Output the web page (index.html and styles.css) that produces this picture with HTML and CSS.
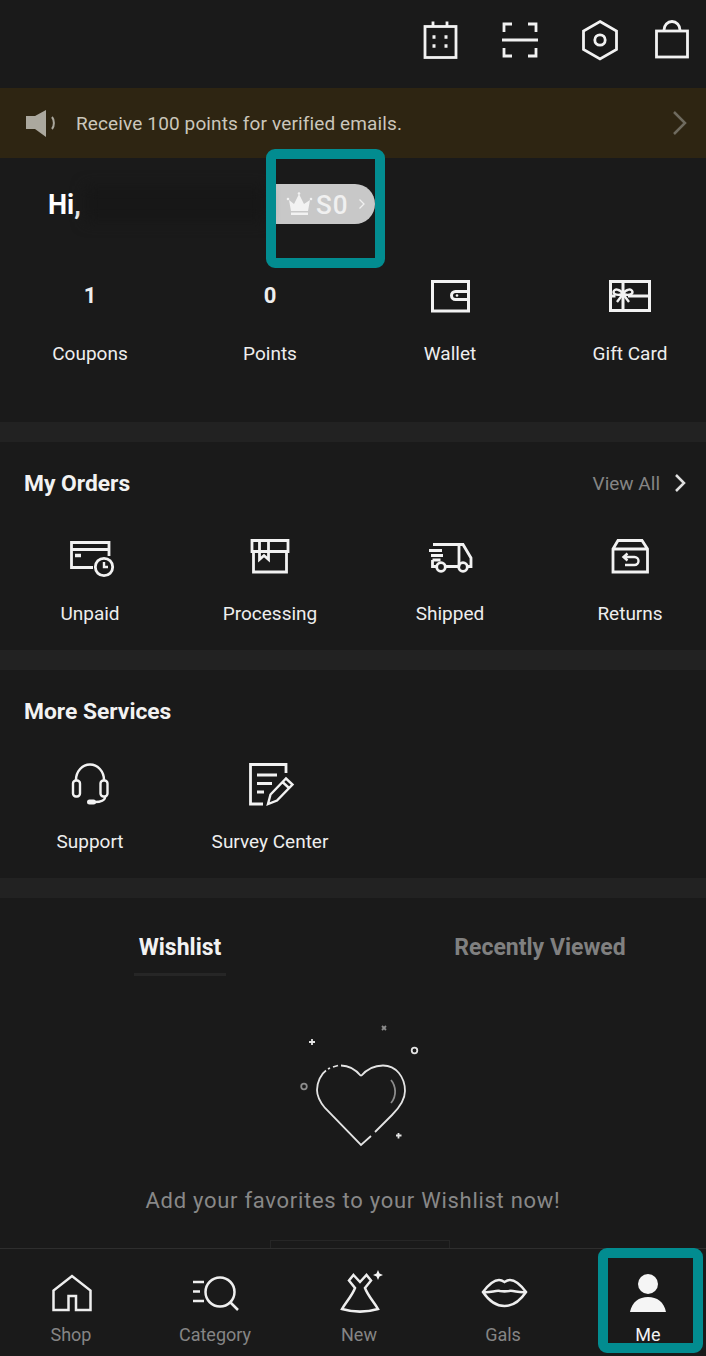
FILE: index.html
```html
<!DOCTYPE html>
<html lang="en">
<head>
  <meta charset="UTF-8">
  <meta name="viewport" content="width=device-width, initial-scale=1.0">
  <title>Me</title>
  <link rel="stylesheet" href="styles.css">
</head>
<body>

<div class="top-bar">
  <svg class="ico" viewBox="0 0 44 44"><rect x="7" y="8.500" width="31" height="31"/><path d="M15 3.500v5M29 3.500v5"/><path class="dots" d="M14.500 19h3M26.500 19h3M14.500 28h3M26.500 28h3"/></svg>
  <svg class="ico" viewBox="0 0 44 44"><path d="M14 6H6v8M30 6h8v8M14 38H6v-8M30 38h8v-8M4 22h36"/></svg>
  <svg class="ico" viewBox="0 0 44 44"><path d="M22 3.500l16.500 9.500v18.500L22 41 5.500 31.500V13z"/><circle cx="22" cy="22" r="5.200"/></svg>
  <svg class="ico bag" viewBox="0 0 44 44"><rect x="6.500" y="13" width="31" height="26"/><path d="M14 13v-1a8 8.500 0 0 1 16 0v1"/></svg>
</div>

<div class="notice">
  <svg class="speaker" viewBox="0 0 30 28"><path d="M0 7h9l11-6v27L9 20H0z"/><path class="paren" d="M26 8c2.500 3 2.500 9 0 12"/></svg>
  <span class="notice-text">Receive 100 points for verified emails.</span>
  <svg class="notice-arrow" viewBox="0 0 16 26"><path d="M2 2l11 11L2 24"/></svg>
</div>

<div class="section profile">
  <div class="greeting">
    <span class="hi">Hi,</span>
    <span class="name"></span>
    <a class="level">
      <svg class="crown" viewBox="0 0 28 26"><path d="M4 9l5 4 5-10 5 10 6-4-2 11H6z"/><rect x="6" y="21.500" width="17" height="2.500"/><circle cx="3" cy="8" r="1.300"/><circle cx="14" cy="2.500" r="1.300"/><circle cx="26" cy="8" r="1.300"/></svg>
      <span class="level-name">S0</span>
      <svg class="level-arrow" viewBox="0 0 8 12"><path d="M1.500 1.500l4.500 4.500-4.500 4.500"/></svg>
    </a>
  </div>
  <div class="grid">
    <div class="item"><div class="count">1</div><span>Coupons</span></div>
    <div class="item"><div class="count">0</div><span>Points</span></div>
    <div class="item">
      <svg class="ico" viewBox="0 0 44 44"><path class="thick" d="M4.500 7.500H40.500V37H4.500z"/><path class="thick" d="M40.500 17.500H27.500a4 4 0 0 0 0 8H40.500"/><circle class="solid" cx="29" cy="21.500" r="1.300"/></svg>
      <span>Wallet</span>
    </div>
    <div class="item">
      <svg class="ico" viewBox="0 0 44 44"><path class="thick" d="M2.500 7.500h39v29h-39zM15 7.500v29M20 22h21.500M2.500 22h5"/><path class="mid" d="M15 20c-3-5-9-6-9.500-2 0 3 5 3.500 9.500 2zM15 20c3-5 9-6 9.500-2 0 3-5 3.500-9.500 2zM15 20l-6 8M15 20l6 8"/></svg>
      <span>Gift Card</span>
    </div>
  </div>
</div>

<div class="section orders">
  <div class="section-head">
    <h2>My Orders</h2>
    <a class="view-all">View All <svg class="view-arrow" viewBox="0 0 12 20"><path d="M2 2l8 8-8 8"/></svg></a>
  </div>
  <div class="grid">
    <div class="item">
      <svg class="ico" viewBox="0 0 44 44"><path d="M41 22V8.500H3.500V33.500H25M3.500 15.500H41"/><path class="dots" d="M7 21.500h6"/><circle cx="36" cy="33" r="8.700"/><path class="mid" d="M36 28v5h4"/></svg>
      <span>Unpaid</span>
    </div>
    <div class="item">
      <svg class="ico" viewBox="0 0 44 44"><path d="M4 6.500h36v11H4zM5.500 17.500V38h33V17.500M11.500 6.500V25.500l4.500-4 4.500 4V6.500"/></svg>
      <span>Processing</span>
    </div>
    <div class="item">
      <svg class="ico" viewBox="0 0 44 44"><path d="M5 10.500H35L43 24v8.500h-4M31 10.500V32.500M18 32.500h12.500M4.500 26v6.500H8"/><path d="M1 16.500h13M3 21.500h12M4.500 26h8"/><circle cx="13" cy="33" r="4.300"/><circle cx="35" cy="33" r="4.300"/></svg>
      <span>Shipped</span>
    </div>
    <div class="item">
      <svg class="ico" viewBox="0 0 44 44"><path d="M10 6.500H34L39.500 15V38H5V15zM5 15H39.500"/><path class="mid" d="M19.500 19.500l-4 3.500 4 3.500M15.500 23H26.500a4 4 0 0 1 0 8H17"/></svg>
      <span>Returns</span>
    </div>
  </div>
</div>

<div class="section services">
  <div class="section-head">
    <h2>More Services</h2>
  </div>
  <div class="grid">
    <div class="item">
      <svg class="ico" viewBox="0 0 44 44"><path class="mid" d="M8 18a14 15.500 0 0 1 28 0"/><rect class="mid" x="5" y="18.500" width="7" height="16" rx="3"/><rect class="mid" x="32.500" y="18.500" width="7" height="16" rx="3"/><path class="mid" d="M37 35c0 3-4 5-10 5"/><rect class="solid" x="19" y="37.500" width="9" height="5" rx="2.500"/></svg>
      <span>Support</span>
    </div>
    <div class="item">
      <svg class="ico" viewBox="0 0 44 44"><path d="M38 11V2.500H2.500V42H15M9 13h20M9 21.500h15M9 30h7"/><path class="mid" d="M20 42l2.500-9.500L38 16.500l6.500 6L29 38.500zM34.500 20l6.500 6"/></svg>
      <span>Survey Center</span>
    </div>
  </div>
</div>

<div class="wishlist">
  <div class="tabs">
    <div class="tab active">Wishlist</div>
    <div class="tab">Recently Viewed</div>
  </div>
  <svg class="heart" viewBox="0 0 160 150">
    <path d="M81 66C87 59 95 55.500 103 55.500 116 55.500 125 67 125 81 125 90 119 98 112 105L95 122M91 126L81 135 45 98C40 92 37 87 37 80 37 72 41 64 46 60.500M48 59L50 58M53 57L58 55.500M61 55.500C70 55.500 76 60 81 66"/>
    <path class="shine" d="M111 70C116 76 117 86 111 93"/>
    <path class="spark" d="M29 32h6M32 29v6M116 125.500h5.500M118.500 123v5.500"/>
    <path class="shine" d="M102 16l4 4M106 16l-4 4"/>
    <circle class="spark" cx="134.500" cy="40.500" r="2.800"/>
    <circle class="shine" cx="24" cy="76.500" r="2.800"/>
  </svg>
  <p class="empty">Add your favorites to your Wishlist now!</p>
  <div class="go-shop"></div>
</div>

<div class="nav">
  <a class="nav-item">
    <svg class="nav-ico" viewBox="0 0 48 48"><path d="M5.500 40V20.500L24 6l18.500 14.500V40H28V26h-7.500v14z"/></svg>
    <span>Shop</span>
  </a>
  <a class="nav-item">
    <svg class="nav-ico" viewBox="0 0 48 48"><circle cx="28" cy="22" r="14.500"/><path d="M38 32l8 8M1 12h11M1 21.500h7M1 31h11"/></svg>
    <span>Category</span>
  </a>
  <a class="nav-item">
    <svg class="nav-ico" viewBox="0 0 48 48"><path d="M17.500 5L24 12l6.500-7 4.500 5.500-6 7.500c3 8 9 14 13 21-12 3.500-24 3.500-36 0 4-7 10-13 13-21l-6-7.500z"/><path class="solid" d="M42 0l1.500 3.500L47 5l-3.500 1.500L42 10l-1.500-3.500L37 5l3.500-1.500z"/></svg>
    <span>New</span>
  </a>
  <a class="nav-item">
    <svg class="nav-ico" viewBox="0 0 48 48"><path d="M3 22C9 14 15 10 19 10c2 0 4 1 5.500 2 1.500-1 3.500-2 5.500-2 4 0 10 4 16 12-6 9-14 14-21.500 14S9 31 3 22z"/><path d="M3 22c7 1 13-2 17-1 3 .5 6 .5 9 0 4-1 10 2 17 1"/></svg>
    <span>Gals</span>
  </a>
  <a class="nav-item current">
    <svg class="nav-ico" viewBox="0 0 48 48"><circle class="solid" cx="24" cy="14" r="10"/><path class="solid" d="M6 42C8 32 15 27 24 27s16 5 18 15z"/></svg>
    <span>Me</span>
  </a>
</div>

<!-- highlight boxes over the page -->
<div class="mark mark-level"></div>
<div class="mark mark-me"></div>

</body>
</html>
```

FILE: styles.css
```css
* {
  box-sizing: border-box;
}

body {
  font-family: Roboto, "Noto Sans", sans-serif;
  background: #1a1a1a;
  color: #eeeeee;
  margin: 0;
  width: 706px;
  height: 1356px;
  overflow: hidden;
  position: relative;
  display: flex;
  flex-direction: column;
}

svg {
  display: block;
  flex-shrink: 0;
  overflow: visible;
}

.ico {
  width: 44px;
  height: 44px;
  fill: none;
  stroke: #f2f2f2;
  stroke-width: 2.8;
}

.ico .dots {
  stroke-width: 3.5;
}

.ico .thick {
  stroke-width: 3;
}

.ico .mid {
  stroke-width: 2.4;
}

.ico .solid {
  fill: #f2f2f2;
  stroke: none;
}

/* top bar */
.top-bar {
  height: 88px;
  flex-shrink: 0;
  display: flex;
  justify-content: flex-end;
  gap: 36px;
  padding: 18px 12px 0 0;
}

.top-bar .bag {
  margin-left: -8px;
}

/* notice */
.notice {
  height: 70px;
  flex-shrink: 0;
  background: #2e2512;
  display: flex;
  align-items: center;
  padding: 0 18px 0 26px;
}

.speaker {
  width: 30px;
  height: 28px;
  fill: #aba89e;
}

.speaker .paren {
  fill: none;
  stroke: #aba89e;
  stroke-width: 2;
}

.notice-text {
  margin-left: 20px;
  font-size: 19px;
  letter-spacing: 0.13px;
  color: #cbc7bc;
}

.notice-arrow {
  width: 16px;
  height: 26px;
  margin-left: auto;
  fill: none;
  stroke: #6f6b5f;
  stroke-width: 2.5;
}

/* sections */
.section {
  flex-shrink: 0;
  border-bottom: 20px solid #222222;
}

.profile {
  height: 284px;
  padding-top: 26px;
}

.orders {
  height: 228px;
  padding-top: 27px;
}

.services {
  height: 228px;
  padding-top: 27px;
}

.greeting {
  height: 40px;
  display: flex;
  align-items: center;
  padding-left: 48px;
  margin-bottom: 50px;
}

.hi {
  width: 37px;
  padding-top: 2px;
  font-size: 27px;
  font-weight: 700;
  color: #ffffff;
}

.name {
  width: 180px;
  height: 36px;
  background: #171717;
  filter: blur(7px);
}

.level {
  width: 103px;
  height: 40px;
  margin-left: 7px;
  border-radius: 0 20px 20px 0;
  background: #c8c8c8;
  display: flex;
  align-items: center;
  padding-left: 13px;
}

.crown {
  width: 28px;
  height: 26px;
  fill: #f2f2f2;
}

.level-name {
  margin-left: 3px;
  padding-top: 2px;
  font-size: 26px;
  font-weight: 500;
  color: #f0f0f0;
  letter-spacing: 1px;
}

.level-arrow {
  width: 8px;
  height: 12px;
  margin-left: 9px;
  fill: none;
  stroke: #f0f0f0;
  stroke-width: 1.3;
}

.section-head {
  height: 28px;
  display: flex;
  justify-content: space-between;
  align-items: center;
  padding: 0 20px 0 24px;
}

h2 {
  margin: 0;
  font-size: 22.8px;
  font-weight: 700;
  color: #f2f2f2;
}

.view-all {
  display: flex;
  align-items: center;
  gap: 14px;
  font-size: 19px;
  color: #858585;
}

.view-arrow {
  width: 12px;
  height: 20px;
  fill: none;
  stroke: #e0e0e0;
  stroke-width: 2.5;
}

.grid {
  display: grid;
  grid-template-columns: repeat(4, 180px);
}

.section-head + .grid {
  margin-top: 37px;
}

.item {
  display: flex;
  flex-direction: column;
  align-items: center;
  gap: 23px;
  font-size: 19px;
  line-height: 25px;
  color: #eeeeee;
}

.count {
  height: 44px;
  line-height: 44px;
  font-size: 22px;
  font-weight: 700;
}

/* wishlist */
.wishlist {
  flex: 1;
  min-height: 0;
  overflow: hidden;
  display: flex;
  flex-direction: column;
  align-items: center;
}

.tabs {
  width: 100%;
  height: 78px;
  flex-shrink: 0;
  display: grid;
  grid-template-columns: 360px 360px;
  padding-top: 35px;
  margin-bottom: 34px;
}

.tab {
  justify-self: center;
  height: 43px;
  font-size: 23px;
  font-weight: 700;
  line-height: 29px;
  color: #808080;
}

.tab.active {
  width: 92px;
  text-align: center;
  color: #f2f2f2;
  border-bottom: 3px solid #262626;
}

.heart {
  width: 160px;
  height: 150px;
  margin-left: 14px;
  fill: none;
  stroke: #e4e4e4;
  stroke-width: 1.8;
}

.heart .shine {
  stroke: #8c8c8c;
}

.empty {
  flex-shrink: 0;
  margin: 24px 0 0;
  font-size: 22px;
  line-height: 34px;
  letter-spacing: 0.72px;
  color: #888888;
}

.go-shop {
  width: 180px;
  height: 40px;
  flex-shrink: 0;
  margin: 22px 0 0 13px;
  border: 1px solid #262626;
}

/* bottom nav */
.nav {
  height: 108px;
  flex-shrink: 0;
  border-top: 1px solid #2e2e2e;
  display: grid;
  grid-template-columns: repeat(5, 144px);
  padding-top: 21px;
}

.nav-item {
  display: flex;
  flex-direction: column;
  align-items: center;
  gap: 6px;
  font-size: 18px;
  line-height: 22px;
  color: #858585;
}

.nav-item span {
  padding-right: 2px;
}

.nav-ico {
  width: 48px;
  height: 48px;
  fill: none;
  stroke: #eeeeee;
  stroke-width: 2.5;
}

.nav-ico .solid {
  fill: #f5f5f5;
  stroke: none;
}

.nav-item.current {
  color: #f2f2f2;
}

.nav-item.current span {
  padding-right: 0;
}

/* highlight boxes */
.mark {
  position: absolute;
  border: 10px solid #028c90;
  border-radius: 9px;
}

.mark-level {
  left: 266px;
  top: 149px;
  width: 119px;
  height: 119px;
}

.mark-me {
  left: 598px;
  top: 1248px;
  width: 105px;
  height: 105px;
}
```
